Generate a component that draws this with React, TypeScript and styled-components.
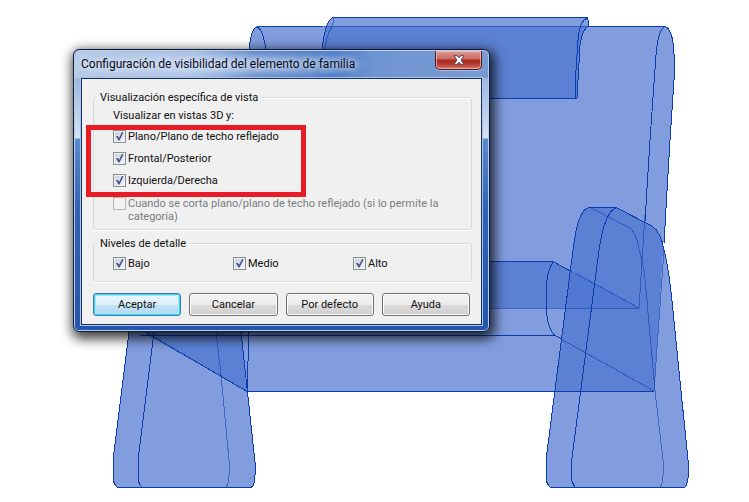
import React, { useId, useState } from "react";
import styled, { createGlobalStyle, css } from "styled-components";

const GlobalStyle = createGlobalStyle`
  *, *::before, *::after { box-sizing: border-box; }
  body {
    margin: 0;
    background: #fff;
    overflow: hidden;
    color: #111;
    font: 11px/13px Roboto, "Noto Sans", sans-serif;
  }
`;

const Workspace = styled.main`
  position: relative;
  min-height: 100vh;
  padding: 49px 16px 16px 73px;
  overflow: hidden;
`;

const Drawing = styled.svg`
  position: absolute;
  top: 0;
  left: 0;
  shape-rendering: crispEdges;
`;

const Dialog = styled.section`
  position: relative;
  max-width: 417px;
  padding: 1px 7px 6px;
  border: 1px solid #0b1b3c;
  border-radius: 6px;
  background:
    linear-gradient(180deg, #7e9ed0 0, #9db9e0 30px, #d5e3f4 88px, #5b8bcd 89px, #2f62b4 160px, #2457ab 100%);
  box-shadow:
    inset 0 0 0 1px #b9cfec,
    2px 4px 12px 3px rgba(0, 0, 0, 0.75);
`;

const TitleBar = styled.header`
  display: flex;
  align-items: flex-start;
  justify-content: space-between;
  height: 27px;
  margin: 0 -6px;
  padding-left: 6px;
  border-radius: 5px 5px 0 0;
  background:
    radial-gradient(ellipse 150px 16px at 145px 14px, rgba(225, 236, 250, 0.6), rgba(225, 236, 250, 0) 100%),
    linear-gradient(90deg, #b9cbe6 0, #a2bbe2 120px, #5c83c8 180px, #5480c9 260px, #6f95d2 300px, #7a9bd2 100%);
`;

const Title = styled.h1`
  margin: 0;
  color: #0a0a14;
  font: 12px/27px Roboto, "Noto Sans", sans-serif;
  white-space: nowrap;
  text-shadow: 0 0 6px #dfeafa, 0 0 8px #dfeafa;
`;

const CloseButton = styled.button`
  display: grid;
  place-items: center;
  width: 47px;
  height: 19px;
  margin-right: 6px;
  padding: 0;
  border: 1px solid #4a1a24;
  border-top: 0;
  border-radius: 0 0 5px 5px;
  background: linear-gradient(180deg, #dd9a93 0, #cb6a61 8px, #a92a1f 9px, #b23a30 13px, #d8796c 100%);
  box-shadow: inset 0 0 0 1px rgba(255, 210, 205, 0.6), 0 1px 0 #a9c0e4;
`;

const Client = styled.form`
  display: flex;
  flex-direction: column;
  padding: 12px 9px 8px 11px;
  border: 1px solid #14305f;
  outline: 1px solid #a9c4e8;
  background: #f0f0f0;
`;

const Group = styled.fieldset`
  min-width: 0;
  margin: 0;
  padding: 5px 19px 6px;
  border: 1px solid #d5dadf;
  border-radius: 3px;
  box-shadow: 0 1px 0 #fff, inset 0 1px 0 #fff;

  & + & {
    margin-top: 7px;
  }
`;

const Legend = styled.legend`
  margin-left: -16px;
  padding: 0 3px;
  background: #f0f0f0;
`;

const Caption = styled.p`
  margin: 0 0 8px;
`;

const MarkedOptions = styled.div`
  position: relative;
  display: grid;
  gap: 8px;
  margin-bottom: 9px;

  &::after {
    content: "";
    position: absolute;
    inset: -5px 146px -9px -27px;
    border: 5px solid #e81c24;
    pointer-events: none;
  }
`;

const Levels = styled.div`
  display: grid;
  grid-template-columns: repeat(3, 120px);
  padding: 2px 0 4px;
`;

const OptionRow = styled.label<{ $disabled?: boolean }>`
  display: flex;
  align-items: flex-start;
  gap: 2px;
  min-height: 14px;
  color: ${({ $disabled }) => ($disabled ? "#7c7c7c" : "#111")};
`;

const TickCell = styled.span`
  display: grid;
  flex: none;
  width: 13px;
  height: 13px;

  & > * {
    grid-area: 1 / 1;
  }
`;

const TickBox = styled.input`
  appearance: none;
  width: 13px;
  height: 13px;
  margin: 0;
  border: 1px solid #8a8f95;
  background: linear-gradient(135deg, #c9cfd8, #f4f5f6);
  background-clip: content-box;
  background-color: #f6f6f6;
  padding: 1px;

  &:disabled {
    border-color: #b6b6b6;
    background: #f3f3f3;
  }
`;

const Tick = styled.svg`
  z-index: 1;
  pointer-events: none;
`;

const Actions = styled.div`
  display: grid;
  grid-template-columns: repeat(4, 1fr);
  gap: 8px;
  margin: 11px 2px 0 0;
`;

const Action = styled.button<{ $primary?: boolean }>`
  height: 23px;
  padding: 0 0 1px;
  border: 1px solid #707070;
  border-radius: 3px;
  color: #111;
  font: inherit;
  background: linear-gradient(180deg, #f3f3f3 0, #ebebeb 50%, #dcdcdc 51%, #cfcfcf 100%);
  box-shadow: inset 0 0 0 1px #fbfbfb;
  ${({ $primary }) =>
    $primary &&
    css`
      border-color: #3c7fb1;
      background: linear-gradient(180deg, #eef7fc 0, #dceffa 50%, #c3e4f6 51%, #b0daf2 100%);
      box-shadow: inset 0 0 0 1px #3fd0f5, inset 0 0 0 2px #a8e6f8;
    `}
`;

const solid = { fill: "#4b74d0", fillOpacity: 0.7 };
const edge = { fill: "none", stroke: "#0a3cae", strokeWidth: 1 };
const hidden = { fill: "none", stroke: "#0a3cae", strokeOpacity: 0.55, strokeWidth: 1 };

function Armchair() {
  return (
    <Drawing width="749" height="502" viewBox="0 0 749 502" aria-hidden="true">
      <g {...solid}>
        <path d="M257 26H665Q673 28 674 54V80L670 140L654 391L639 308H236L249 50Q251 30 257 26Z" />
        <path d="M333 17H587Q589 20 588 26Q582 30 580 45L577 98H315L322 50Q325 20 333 17Z" />
        <path d="M147 261H553L639 308L654 391H247L147 335Z" />
        <path d="M589 207H616L652 226Q661 232 664 250Q669 270 672 301L688 460V478Q687 487 684 487H551Q546 485 546 476V460L573 250Q578 209 589 207Z" />
        <path d="M156 207H183L219 226Q228 232 231 250L241 332L255 462V475Q255 486 251 487H118Q113 485 113 476V460L140 250Q145 209 156 207Z" />
      </g>
      <g {...hidden}>
        <path d="M322 26.500H588" />
        <path d="M240 308.500H639L645 215" />
        <path d="M591 208L628 227Q636 231 639 249Q645 269 646 290L655 391L663 460V475Q663 484 660 487" />
        <path d="M575 273L639 308M561 339L654 391" />
        <path d="M216 332L221 375L229 460V475Q229 484 226 487" />
        <path d="M664 250L654 391" />
        <path d="M333 18Q334 25 330 30Q326 38 325 50" />
      </g>
      <g {...edge}>
        <path d="M249 50Q251 28 257 27Q263 29 266 50" />
        <path d="M257 26.500H322M588 26.500H665" />
        <path d="M322 50Q325 21 333 17.500H587Q589 20 588 26Q582 31 580 45L577 98.500H480" />
        <path d="M587 18Q579 22 578 40L575 85V98" />
        <path d="M645 221L650 140L656 55Q658 29 665 26.500Q673 29 674 54V80L670 140L664 243" />
        <path d="M480 261.500H553L572 272M553 262Q547 270 546 290V305Q547 330 556 336L562 339" />
        <path d="M140 335.500H555M145 332L247 391.500H654M249 332L247 391" />
        <path d="M589 207.500H616L652 226Q661 232 664 250Q669 270 672 301L688 460V478Q687 487 684 487.500H551Q546 485 546 476V460L573 250Q578 209 589 207.500" />
        <path d="M616 208Q605 211 599 250L572 458L571 472Q571 482 575 487" />
        <path d="M129 332L113 460V476Q113 485 118 487.500H251Q255 486 255 475V462L241 332" />
        <path d="M154 332L138 460V475Q138 484 142 487" />
      </g>
    </Drawing>
  );
}

type OptionProps = { label: string; initial?: boolean; disabled?: boolean };

function Option({ label, initial = false, disabled }: OptionProps) {
  const id = useId();
  const [checked, setChecked] = useState(initial);
  return (
    <OptionRow htmlFor={id} $disabled={disabled}>
      <TickCell>
        <TickBox
          id={id}
          type="checkbox"
          checked={checked}
          disabled={disabled}
          onChange={(e) => setChecked(e.target.checked)}
        />
        {checked && (
          <Tick width="13" height="13" viewBox="0 0 13 13" aria-hidden="true">
            <path d="M3 6L5 6L6 8L9 2L10.500 2.500L6.500 10.500H5.500Z" fill="#40528f" />
          </Tick>
        )}
      </TickCell>
      <span>{label}</span>
    </OptionRow>
  );
}

export default function App() {
  return (
    <>
      <GlobalStyle />
      <Workspace>
        <Armchair />
        <Dialog role="dialog" aria-labelledby="dialog-title">
          <TitleBar>
            <Title id="dialog-title">Configuración de visibilidad del elemento de familia</Title>
            <CloseButton type="button" aria-label="Cerrar">
              <svg width="12" height="10" viewBox="0 0 12 10" aria-hidden="true">
                <path
                  d="M1 .7H4.300L6 2.800L7.700 .7H11L8 5L11 9.300H7.700L6 7.200L4.300 9.300H1L4 5Z"
                  fill="#fff"
                  stroke="#53444c"
                  strokeWidth="1"
                />
              </svg>
            </CloseButton>
          </TitleBar>
          <Client onSubmit={(e) => e.preventDefault()}>
            <Group>
              <Legend>Visualización específica de vista</Legend>
              <Caption>Visualizar en vistas 3D y:</Caption>
              <MarkedOptions>
                <Option label="Plano/Plano de techo reflejado" initial />
                <Option label="Frontal/Posterior" initial />
                <Option label="Izquierda/Derecha" initial />
              </MarkedOptions>
              <Option label="Cuando se corta plano/plano de techo reflejado (si lo permite la categoría)" disabled />
            </Group>
            <Group>
              <Legend>Niveles de detalle</Legend>
              <Levels>
                <Option label="Bajo" initial />
                <Option label="Medio" initial />
                <Option label="Alto" initial />
              </Levels>
            </Group>
            <Actions>
              <Action type="submit" $primary>Aceptar</Action>
              <Action type="button">Cancelar</Action>
              <Action type="button">Por defecto</Action>
              <Action type="button">Ayuda</Action>
            </Actions>
          </Client>
        </Dialog>
      </Workspace>
    </>
  );
}
